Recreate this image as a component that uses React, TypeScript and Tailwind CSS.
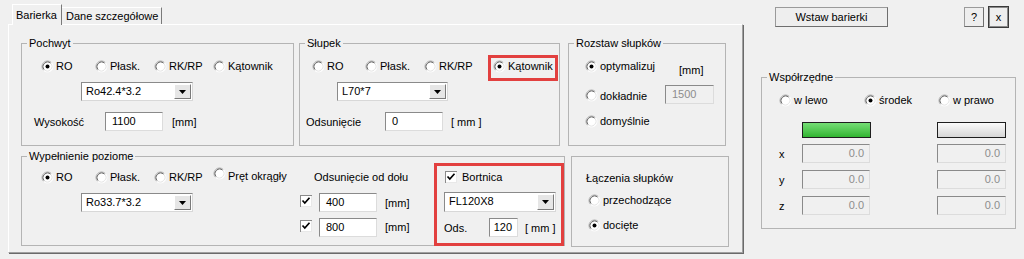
import React from "react";

function RadioCircle({ checked, className = "" }: { checked?: boolean; className?: string }) {
  return (
    <svg width="13" height="13" viewBox="0 0 13 13" className={`shrink-0 ${className}`}>
      <circle cx="6.5" cy="6.5" r="5.5" fill="#fff" />
      <path d="M2.61 10.39 A5.5 5.5 0 0 1 10.39 2.61" fill="none" stroke="#a8a8a8" strokeWidth="1" />
      <path d="M3.32 9.68 A4.5 4.5 0 0 1 9.68 3.32" fill="none" stroke="#606060" strokeWidth="1" />
      <path d="M10.39 2.61 A5.5 5.5 0 0 1 2.61 10.39" fill="none" stroke="#ffffff" strokeWidth="1" />
      <path d="M9.68 3.32 A4.5 4.5 0 0 1 3.32 9.68" fill="none" stroke="#e4e4e4" strokeWidth="1" />
      {checked && <circle cx="6.5" cy="6.5" r="2" fill="#000" />}
    </svg>
  );
}

function Radio({
  label,
  checked,
  className = "",
  circleClass = "",
}: {
  label: string;
  checked?: boolean;
  className?: string;
  circleClass?: string;
}) {
  return (
    <div className={`flex items-center h-[14px] shrink-0 ${className}`}>
      <RadioCircle checked={checked} className={circleClass} />
      <span className="ml-[2px] whitespace-nowrap">{label}</span>
    </div>
  );
}

function Check({ className = "" }: { className?: string }) {
  return (
    <svg width="12" height="12" viewBox="0 0 12 12" className={`shrink-0 ${className}`}>
      <rect x="0" y="0" width="12" height="12" fill="#8a8a8a" />
      <rect x="1" y="1" width="11" height="11" fill="#e8e8e8" />
      <rect x="1" y="1" width="10" height="10" fill="#fff" />
      <path d="M2.5 5.5 L4.8 8 L9.5 2.8" fill="none" stroke="#000" strokeWidth="1.7" />
    </svg>
  );
}

function Combo({ value, className = "" }: { value: string; className?: string }) {
  return (
    <div
      className={`flex h-[19px] bg-white border border-t-[#8a8a8a] border-l-[#8a8a8a] border-r-[#d8d8d8] border-b-[#d8d8d8] ${className}`}
    >
      <span className="flex-1 pl-[4px] leading-[17px] whitespace-nowrap">{value}</span>
      <div className="w-[17px] my-[1px] mr-[1px] bg-[#e6e6e6] border border-t-white border-l-white border-r-[#7a7a7a] border-b-[#7a7a7a] flex items-center justify-center">
        <svg width="7" height="4" viewBox="0 0 7 4">
          <path d="M0 0 H7 L3.5 4 Z" fill="#000" />
        </svg>
      </div>
    </div>
  );
}

function Field({
  value,
  className = "",
  disabled,
  right,
}: {
  value: string;
  className?: string;
  disabled?: boolean;
  right?: boolean;
}) {
  return (
    <div
      className={`h-[19px] shrink-0 border border-t-[#8a8a8a] border-l-[#8a8a8a] border-r-[#dcdcdc] border-b-[#dcdcdc] leading-[17px] whitespace-nowrap ${
        disabled ? "bg-[#f0f0f0] text-[#8d8d8d]" : "bg-white"
      } ${right ? "text-right pr-[5px]" : "pl-[6px]"} ${className}`}
    >
      {value}
    </div>
  );
}

function Group({
  title,
  className = "",
  children,
}: {
  title: string;
  className?: string;
  children: React.ReactNode;
}) {
  return (
    <fieldset className={`border border-[#b4b4b4] shrink-0 ${className}`}>
      <legend className="ml-[5px] px-[2px] leading-[13px]">{title}</legend>
      {children}
    </fieldset>
  );
}

export default function App() {
  return (
    <div className="flex w-[1024px] h-[259px] bg-[#f0f0f0] text-[11px] leading-[14px] text-black font-['Liberation_Sans',Arial,sans-serif] overflow-hidden">
      {/* Tab control */}
      <div className="ml-[8px] w-[735px] flex flex-col pt-[4px] shrink-0">
        <div className="flex items-end h-[20px] pl-[4px] relative z-10">
          <div className="h-[21px] -mb-[1px] w-[50px] bg-[#f0f0f0] border-l border-t border-white border-r border-r-[#7a7a7a] pl-[3px] pt-[3px]">
            Barierka
          </div>
          <div className="h-[17px] w-[100px] border-t border-white border-r border-r-[#7a7a7a] pl-[4px] pt-[1px] whitespace-nowrap">
            Dane szczegółowe
          </div>
        </div>
        <div className="h-[229px] border border-white border-r-[#a0a0a0] border-b-[#a0a0a0] shadow-[1px_1px_0_#6a6a6a] pl-[12px] pt-[12px] flex flex-col">
          {/* Row 1 */}
          <div className="flex items-start">
            <Group title="Pochwyt" className="w-[273px] h-[109px]">
              <div className="flex flex-col pl-[19px] pt-[9px]">
                <div className="flex">
                  <Radio checked label="RO" className="w-[54px]" />
                  <Radio label="Płask." className="w-[59px]" />
                  <Radio label="RK/RP" className="w-[59px]" />
                  <Radio label="Kątownik" />
                </div>
                <Combo value="Ro42.4*3.2" className="mt-[9px] ml-[40px] w-[112px]" />
                <div className="flex items-center mt-[11px] -ml-[7px]">
                  <span className="w-[71px] shrink-0">Wysokość</span>
                  <Field value="1100" className="w-[58px]" />
                  <span className="ml-[9px]">[mm]</span>
                </div>
              </div>
            </Group>

            <Group title="Słupek" className="ml-[5px] w-[261px] h-[109px]">
              <div className="flex flex-col pl-[12px] pt-[9px]">
                <div className="flex">
                  <Radio label="RO" className="w-[53px]" />
                  <Radio label="Płask." className="w-[59px]" />
                  <Radio label="RK/RP" className="w-[69px]" />
                  <div className="relative">
                    <Radio checked label="Kątownik" />
                    <span className="absolute -left-[5px] -top-[4px] w-[70px] h-[26px] border-[3px] border-[#e2403f]" />
                  </div>
                </div>
                <Combo value="L70*7" className="mt-[9px] ml-[25px] w-[111px]" />
                <div className="flex items-center mt-[11px] -ml-[6px]">
                  <span className="w-[79px] shrink-0">Odsunięcie</span>
                  <Field value="0" className="w-[58px]" />
                  <span className="ml-[8px]">[ mm ]</span>
                </div>
              </div>
            </Group>

            <Group title="Rozstaw słupków" className="ml-[8px] w-[158px] h-[109px]">
              <div className="flex flex-col pl-[16px] pt-[9px]">
                <div className="flex items-start h-[14px]">
                  <Radio checked label="optymalizuj" className="w-[94px]" />
                  <span className="mt-[4px] leading-[14px]">[mm]</span>
                </div>
                <div className="flex items-center mt-[12px]">
                  <Radio label="dokładnie" className="w-[80px] mt-[2px]" />
                  <Field value="1500" disabled className="w-[49px]" />
                </div>
                <Radio label="domyślnie" className="mt-[10px]" />
              </div>
            </Group>
          </div>

          {/* Row 2 */}
          <div className="flex items-start mt-[4px]">
            <Group title="Wypełnienie poziome" className="w-[540px] h-[96px]">
              <div className="flex">
                <div className="w-[278px] shrink-0 flex flex-col pl-[19px] pt-[7px]">
                  <div className="flex">
                    <Radio checked label="RO" className="w-[54px]" />
                    <Radio label="Płask." className="w-[59px]" />
                    <Radio label="RK/RP" className="w-[59px]" />
                    <Radio label="Pręt okrągły" circleClass="relative -top-[3px]" className="-mt-[1px]" />
                  </div>
                  <Combo value="Ro33.7*3.2" className="mt-[9px] ml-[40px] w-[112px]" />
                </div>
                <div className="w-[134px] shrink-0 flex flex-col pt-[7px]">
                  <span className="ml-[14px] h-[14px] whitespace-nowrap">Odsunięcie od dołu</span>
                  <div className="flex items-start mt-[9px]">
                    <Check className="mt-[2px]" />
                    <Field value="400" className="ml-[7px] w-[58px]" />
                    <span className="ml-[8px] mt-[3px]">[mm]</span>
                  </div>
                  <div className="flex items-start mt-[6px]">
                    <Check className="mt-[2px]" />
                    <Field value="800" className="ml-[7px] w-[58px]" />
                    <span className="ml-[8px] mt-[2px]">[mm]</span>
                  </div>
                </div>
                <div className="w-[130px] h-[83px] shrink-0 border-[3px] border-[#e2403f] flex flex-col pl-[7px] pt-[4px]">
                  <div className="flex items-center h-[14px] ml-[1px]">
                    <Check />
                    <span className="ml-[5px]">Bortnica</span>
                  </div>
                  <Combo value="FL120X8" className="mt-[8px] w-[112px] h-[20px]" />
                  <div className="flex items-center mt-[6px]">
                    <span className="w-[45px] shrink-0">Ods.</span>
                    <Field value="120" right className="w-[29px]" />
                    <span className="ml-[7px]">[ mm ]</span>
                  </div>
                </div>
              </div>
            </Group>

            <div className="ml-[6px] mt-[6px] w-[158px] h-[91px] shrink-0 border border-[#b4b4b4] flex flex-col pl-[14px] pt-[14px]">
              <span className="h-[14px] whitespace-nowrap">Łączenia słupków</span>
              <Radio label="przechodzące" className="mt-[8px] ml-[2px]" />
              <Radio checked label="docięte" className="mt-[11px] ml-[2px]" />
            </div>
          </div>
        </div>
      </div>

      {/* Right side */}
      <div className="flex flex-col w-[281px] shrink-0">
        <div className="flex items-start pt-[7px]">
          <div className="ml-[32px] w-[113px] h-[20px] flex items-center justify-center bg-[#eeeeee] border border-[#9a9a9a] border-r-[#6e6e6e] border-b-[#6e6e6e]">
            Wstaw barierki
          </div>
          <div className="ml-[76px] w-[20px] h-[20px] flex items-center justify-center bg-[#eeeeee] border border-[#9a9a9a] border-r-[#6e6e6e] border-b-[#6e6e6e]">
            ?
          </div>
          <div className="ml-[4px] -mt-[1px] w-[21px] h-[22px] flex items-center justify-center bg-[#eeeeee] border border-[#3a3a3a] shadow-[inset_0_0_0_1px_#8a8a8a]">
            x
          </div>
        </div>

        <Group title="Współrzędne" className="ml-[18px] mt-[43px] w-[255px] h-[158px]">
          <div className="flex flex-col pl-[17px] pt-[9px]">
            <div className="flex">
              <Radio label="w lewo" className="w-[85px]" />
              <Radio checked label="środek" className="w-[74px]" />
              <Radio label="w prawo" />
            </div>
            <div className="flex mt-[15px] ml-[23px]">
              <div className="w-[69px] h-[16px] border border-[#1e1e1e] bg-linear-to-b from-[#74de74] to-[#2fb52f]" />
              <div className="ml-[66px] w-[69px] h-[16px] border border-[#1e1e1e] bg-linear-to-b from-[#fbfbfb] to-[#d6d6d6]" />
            </div>
            <div className="flex items-center mt-[6px]">
              <span className="w-[23px] shrink-0">x</span>
              <Field value="0.0" disabled right className="w-[68px]" />
              <Field value="0.0" disabled right className="ml-[67px] w-[69px]" />
            </div>
            <div className="flex items-center mt-[7px]">
              <span className="w-[23px] shrink-0">y</span>
              <Field value="0.0" disabled right className="w-[68px]" />
              <Field value="0.0" disabled right className="ml-[67px] w-[69px]" />
            </div>
            <div className="flex items-center mt-[7px]">
              <span className="w-[23px] shrink-0">z</span>
              <Field value="0.0" disabled right className="w-[68px]" />
              <Field value="0.0" disabled right className="ml-[67px] w-[69px]" />
            </div>
          </div>
        </Group>
      </div>
    </div>
  );
}
